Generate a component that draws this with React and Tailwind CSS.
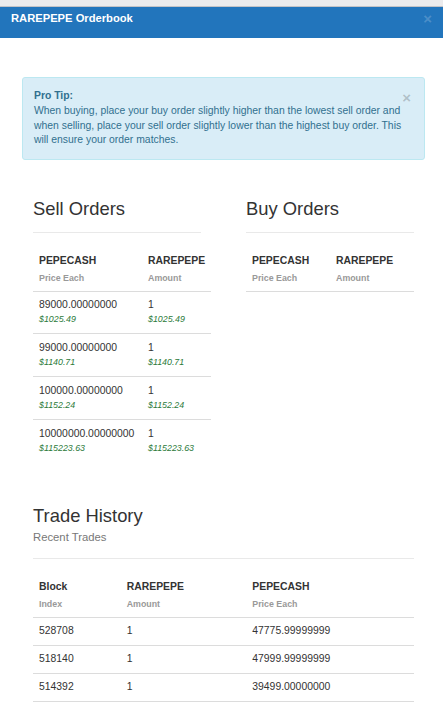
import React from 'react';

const sellOrders = [
  { price: '89000.00000000', amount: '1', usd: '$1025.49' },
  { price: '99000.00000000', amount: '1', usd: '$1140.71' },
  { price: '100000.00000000', amount: '1', usd: '$1152.24' },
  { price: '10000000.00000000', amount: '1', usd: '$115223.63' },
];

const trades = [
  { block: '528708', amount: '1', price: '47775.99999999' },
  { block: '518140', amount: '1', price: '47999.99999999' },
  { block: '514392', amount: '1', price: '39499.00000000' },
];

function HeadCell({ title, sub, className = '' }) {
  return (
    <th className={`pl-[6px] pb-[4.5px] text-left align-top ${className}`}>
      <div className="text-[10.4px] leading-[16.4px] font-bold text-[#333]">{title}</div>
      <div className="text-[8.84px] leading-[16.4px] font-bold text-[#999]">{sub}</div>
    </th>
  );
}

function SectionTitle({ children }) {
  return (
    <div className="border-b border-[#e9e9e9] pb-[13px]">
      <h3 className="text-[18.4px] leading-[20px] font-normal text-[#333]">{children}</h3>
    </div>
  );
}

export default function App() {
  return (
    <div className="w-[443px] min-h-[709px] bg-white font-['Liberation_Sans',Arial,sans-serif] text-[#333]">
      <div className="h-[7px] bg-[#ebebed] border-b border-[#c3c3c7]" />
      <div className="h-[31px] bg-[#2275bc] flex justify-between px-[11px] pt-[4px]">
        <span className="text-[11.2px] leading-[15px] font-bold text-white">RAREPEPE Orderbook</span>
        <span className="text-[15px] leading-[15px] font-bold text-white/20">×</span>
      </div>

      <div className="pl-[22px] pr-[18px] pt-[39px] pb-[40px]">
        {/* tip */}
        <div className="relative border border-[#bce8f1] bg-[#d9edf7] rounded-[3px] p-[11px] text-[#31708f] text-[10.4px] leading-[14.8px]">
          <span className="absolute right-[13px] top-[12px] text-[15px] leading-[15px] font-bold text-black/20">×</span>
          <div className="font-bold">Pro Tip:</div>
          <div>
            When buying, place your buy order slightly higher than the lowest sell order and when selling, place your sell order slightly lower than the highest buy order. This will ensure your order matches.
          </div>
        </div>

        <div className="px-[11px]">
          <div className="flex gap-[45px] mt-[39px]">
            <div className="w-[168px]">
              <SectionTitle>Sell Orders</SectionTitle>
              <table className="w-[178px] table-fixed mt-[20px]">
                <thead>
                  <tr className="border-b border-[#dcdcdc]">
                    <HeadCell title="PEPECASH" sub="Price Each" className="w-[109px]" />
                    <HeadCell title="RAREPEPE" sub="Amount" />
                  </tr>
                </thead>
                <tbody>
                  {sellOrders.map((o) => (
                    <tr key={o.price} className="border-t border-[#dcdcdc]">
                      <td className="pl-[6px] py-[6.2px] align-top text-[10.4px] leading-[14.8px]">
                        <div>{o.price}</div>
                        <div className="italic text-[8.84px] text-[#2b7a39]">{o.usd}</div>
                      </td>
                      <td className="pl-[6px] py-[6.2px] align-top text-[10.4px] leading-[14.8px]">
                        <div>{o.amount}</div>
                        <div className="italic text-[8.84px] text-[#2b7a39]">{o.usd}</div>
                      </td>
                    </tr>
                  ))}
                </tbody>
              </table>
            </div>

            <div className="w-[168px]">
              <SectionTitle>Buy Orders</SectionTitle>
              <table className="w-full table-fixed mt-[20px]">
                <thead>
                  <tr className="border-b border-[#dcdcdc]">
                    <HeadCell title="PEPECASH" sub="Price Each" className="w-[84px]" />
                    <HeadCell title="RAREPEPE" sub="Amount" />
                  </tr>
                </thead>
              </table>
            </div>
          </div>

          {/* trade history */}
          <div className="mt-[44px] border-b border-[#e9e9e9] pb-[13.5px]">
            <h3 className="text-[18.4px] leading-[20px] font-normal text-[#333]">Trade History</h3>
            <div className="mt-[3.4px] text-[11.3px] leading-[15px] text-[#777]">Recent Trades</div>
          </div>
          <table className="w-full table-fixed mt-[20px]">
            <thead>
              <tr className="border-b border-[#dcdcdc]">
                <HeadCell title="Block" sub="Index" className="w-[87.7px]" />
                <HeadCell title="RAREPEPE" sub="Amount" className="w-[125.6px]" />
                <HeadCell title="PEPECASH" sub="Price Each" />
              </tr>
            </thead>
            <tbody>
              {trades.map((t) => (
                <tr key={t.block} className="border-b border-[#dcdcdc]">
                  <td className="pl-[6px] py-[6.2px] text-[10.4px] leading-[14.8px]">{t.block}</td>
                  <td className="pl-[6px] py-[6.2px] text-[10.4px] leading-[14.8px]">{t.amount}</td>
                  <td className="pl-[6px] py-[6.2px] text-[10.4px] leading-[14.8px]">{t.price}</td>
                </tr>
              ))}
            </tbody>
          </table>
        </div>
      </div>
    </div>
  );
}
